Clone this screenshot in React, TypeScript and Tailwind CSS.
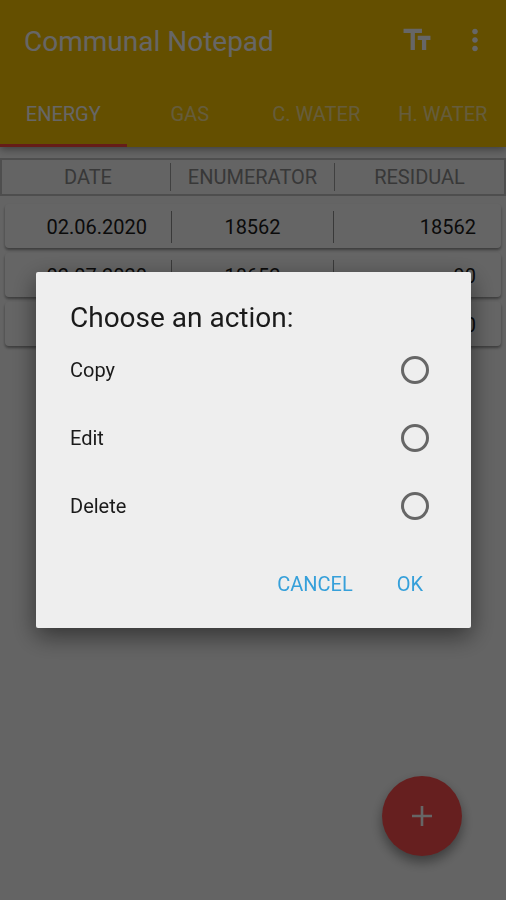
import { useState } from "react";
import { MdMoreVert, MdTextFields } from "react-icons/md";

const tabs = ["ENERGY", "GAS", "C. WATER", "H. WATER"];

const readings = [
  { date: "02.06.2020", enumerator: "18562", residual: "18562" },
  { date: "02.07.2020", enumerator: "18652", residual: "90" },
  { date: "", enumerator: "", residual: "0" },
];

const actions = ["Copy", "Edit", "Delete"];

function Header() {
  const [active, setActive] = useState(0);

  return (
    <header className="bg-[#fbc500] text-white shadow-[0_2px_8px_rgba(0,0,0,0.4)]">
      <div className="flex h-[83px] items-center justify-between pl-6 pr-3.5">
        <h1 className="text-[28px] leading-9">Communal Notepad</h1>
        <div className="flex gap-6 pb-1">
          <button type="button" aria-label="Text size">
            <MdTextFields className="size-[34px]" />
          </button>
          <button type="button" aria-label="More options">
            <MdMoreVert className="size-[34px]" />
          </button>
        </div>
      </div>
      <nav className="grid grid-cols-4">
        {tabs.map((tab, i) => (
          <button
            key={tab}
            type="button"
            onClick={() => setActive(i)}
            className={
              i === active
                ? "h-16 whitespace-nowrap border-b-3 border-[#ff4a40] text-xl"
                : "h-16 whitespace-nowrap border-b-3 border-transparent text-xl text-white/60"
            }
          >
            {tab}
          </button>
        ))}
      </nav>
    </header>
  );
}

function ReadingsTable() {
  return (
    <table className="mt-[11px] block text-xl">
      <thead className="block">
        <tr className="grid h-[38px] grid-cols-[103fr_100fr_103fr] items-center border-2 border-[#c4c4c4] text-[#8c8c8c]">
          <th className="border-r border-[#a0a0a0] pl-1 font-normal">DATE</th>
          <th className="border-r border-[#a0a0a0] font-normal">ENUMERATOR</th>
          <th className="font-normal">RESIDUAL</th>
        </tr>
      </thead>
      <tbody className="mt-2 flex flex-col gap-[5px] px-[5px]">
        {readings.map((row) => (
          <tr
            key={row.residual}
            className="grid h-11 grid-cols-[103fr_100fr_103fr] items-center rounded-sm bg-[#fdfdfd] pt-px text-[#1c1c1c] shadow-[0_2px_3px_rgba(0,0,0,0.4)]"
          >
            <td className="h-8 border-r border-[#909090] pr-6 text-right leading-8">{row.date}</td>
            <td className="h-8 border-r border-[#909090] text-center leading-8">{row.enumerator}</td>
            <td className="h-8 pr-[25px] text-right leading-8">{row.residual}</td>
          </tr>
        ))}
      </tbody>
    </table>
  );
}

function ActionDialog() {
  const [selected, setSelected] = useState("");

  return (
    <div className="fixed inset-0 flex items-center bg-black/60 pl-9 pr-[35px]">
      <div
        role="dialog"
        aria-modal="true"
        aria-labelledby="dialog-title"
        className="w-full rounded-xs bg-[#eeeeee] pb-5 pt-7 text-[#1a1a1a] shadow-[0_8px_24px_rgba(0,0,0,0.5)]"
      >
        <h2 id="dialog-title" className="px-[34px] text-[28px] leading-9">
          Choose an action:
        </h2>
        {actions.map((action) => (
          <label key={action} className="flex h-17 items-center justify-between pl-[34px] pr-[42px] text-xl">
            {action}
            <input
              type="radio"
              name="action"
              value={action}
              checked={selected === action}
              onChange={() => setSelected(action)}
              className="size-7 appearance-none rounded-full border-3 border-[#666666] checked:border-8 checked:border-[#3aa0dc]"
            />
          </label>
        ))}
        <div className="mt-5 flex justify-end gap-5 pr-9 text-xl text-[#36a0da]">
          <button type="button" className="h-12 px-3">
            CANCEL
          </button>
          <button type="button" className="h-12 px-3">
            OK
          </button>
        </div>
      </div>
    </div>
  );
}

export default function App() {
  return (
    <div className="min-h-screen bg-[#fafafa] font-[Roboto,sans-serif]">
      <Header />
      <main>
        <ReadingsTable />
      </main>
      <button
        type="button"
        aria-label="Add reading"
        className="fixed bottom-11 right-11 flex size-20 items-center justify-center rounded-full bg-[#ff4e4e] text-white shadow-[0_6px_12px_rgba(0,0,0,0.4)]"
      >
        <svg viewBox="0 0 20 20" className="size-5" stroke="currentColor" strokeWidth="2.6">
          <path d="M10 0v20M0 10h20" />
        </svg>
      </button>
      <ActionDialog />
    </div>
  );
}
